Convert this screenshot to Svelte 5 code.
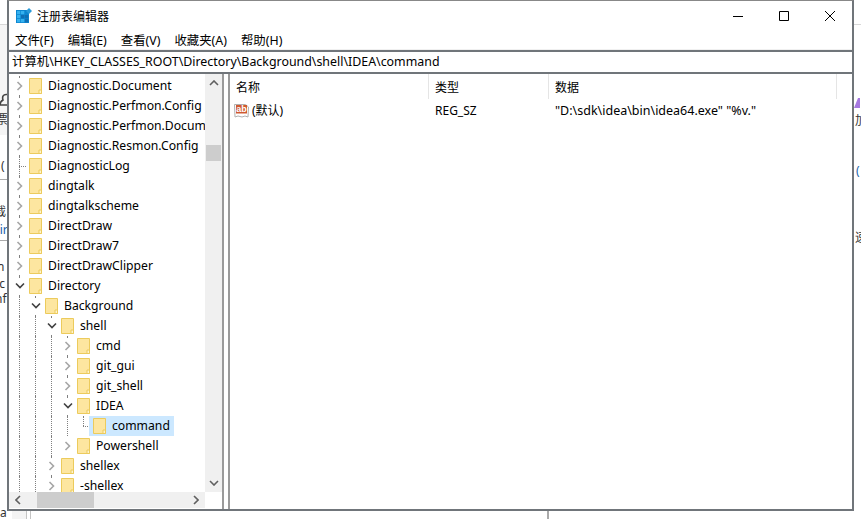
<script lang="ts">
  type Node = { name: string; depth: number; state: 'closed' | 'open' | 'leaf'; guides: number[]; selected?: boolean }

  // guides: tree levels whose dotted line runs through this row
  const nodes: Node[] = [
    { name: 'Diagnostic.Document', depth: 0, state: 'closed', guides: [0] },
    { name: 'Diagnostic.Perfmon.Config', depth: 0, state: 'closed', guides: [0] },
    { name: 'Diagnostic.Perfmon.Document', depth: 0, state: 'closed', guides: [0] },
    { name: 'Diagnostic.Resmon.Config', depth: 0, state: 'closed', guides: [0] },
    { name: 'DiagnosticLog', depth: 0, state: 'leaf', guides: [0] },
    { name: 'dingtalk', depth: 0, state: 'closed', guides: [0] },
    { name: 'dingtalkscheme', depth: 0, state: 'closed', guides: [0] },
    { name: 'DirectDraw', depth: 0, state: 'closed', guides: [0] },
    { name: 'DirectDraw7', depth: 0, state: 'closed', guides: [0] },
    { name: 'DirectDrawClipper', depth: 0, state: 'closed', guides: [0] },
    { name: 'Directory', depth: 0, state: 'open', guides: [0] },
    { name: 'Background', depth: 1, state: 'open', guides: [0, 1] },
    { name: 'shell', depth: 2, state: 'open', guides: [0, 1, 2] },
    { name: 'cmd', depth: 3, state: 'closed', guides: [0, 1, 2, 3] },
    { name: 'git_gui', depth: 3, state: 'closed', guides: [0, 1, 2, 3] },
    { name: 'git_shell', depth: 3, state: 'closed', guides: [0, 1, 2, 3] },
    { name: 'IDEA', depth: 3, state: 'open', guides: [0, 1, 2, 3] },
    { name: 'command', depth: 4, state: 'leaf', guides: [0, 1, 2, 3], selected: true },
    { name: 'Powershell', depth: 3, state: 'closed', guides: [0, 1, 2] },
    { name: 'shellex', depth: 2, state: 'closed', guides: [0, 1, 2] },
    { name: '-shellex', depth: 2, state: 'closed', guides: [0, 1, 2] },
  ]

  const menus = ['文件(F)', '编辑(E)', '查看(V)', '收藏夹(A)', '帮助(H)']

  // bits of the window behind, showing past the edges
  const behind = [
    { t: '票', x: -4, y: 112, c: '#333' },
    { t: '(', x: 1, y: 158, c: '#333' },
    { t: '截', x: -6, y: 204, c: '#333' },
    { t: 'Dir', x: -9, y: 222, c: '#1a5fa8' },
    { t: 'n', x: -3, y: 259, c: '#333' },
    { t: 'oc', x: -8, y: 276, c: '#333' },
    { t: 'nf', x: -5, y: 291, c: '#333' },
    { t: 'a', x: 0, y: 505, c: '#333' },
    { t: '加', x: 855, y: 113, c: '#333' },
    { t: '(', x: 856, y: 163, c: '#1a5fa8' },
    { t: '速', x: 855, y: 230, c: '#333' },
  ]
</script>

<div class="desk">
  <div class="backdrop">
    <i class="panel"></i>
    <svg class="person" width="7" height="16" viewBox="0 0 7 16">
      <path d="M7 2.500C3 2 2 5 3 8c-2 1-3 3-3 5h7" fill="none" stroke="#444" stroke-width="1.600" />
    </svg>
    {#each behind as b}
      <span class="bit" style="left: {b.x}px; top: {b.y}px; color: {b.c}">{b.t}</span>
    {/each}
    <svg class="tri" width="6" height="10" viewBox="0 0 6 10"><path d="M0 10L4 0l2 0v10z" fill="#a678e0" /></svg>
    <i class="stub s1"></i>
    <i class="stub s2"></i>
    <i class="stub s3"></i>
    <i class="stub s4"></i>
    <i class="stub s5"></i>
    <i class="stub s6"></i>
    <i class="stub s7"></i>
    <i class="stub s8"></i>
  </div>

  <div class="window">
    <header class="titlebar">
      <svg class="app-icon" width="16" height="16" viewBox="0 0 16 16">
        <path d="M0 2h13v13H0z" fill="#0c86d0" />
        <path d="M1 3h3.300v3.300H1zM5 3h3.300v3.300H5zM1 7h3.300v3.300H1zM1 11h3.300v3.300H1zM5 11h3.300v3.300H5z" fill="#35b1ef" />
        <path d="M5 7h3.300v3.300H5zM9 7h3.300v3.300H9zM9 11h3.300v3.300H9z" fill="#0f6fb4" />
        <path d="M13 0l3 3-3 3-3-3z" fill="#2a9ad8" />
      </svg>
      <span class="title">注册表编辑器</span>
      <div class="controls">
        <svg width="10" height="10" viewBox="0 0 10 10"><path d="M0 5.500h10" stroke="#000" /></svg>
        <svg width="10" height="10" viewBox="0 0 10 10"><path d="M.5.500h9v9h-9z" fill="none" stroke="#000" /></svg>
        <svg width="10" height="10" viewBox="0 0 10 10"><path d="M0 0l10 10M10 0L0 10" stroke="#000" /></svg>
      </div>
    </header>

    <nav class="menubar">
      {#each menus as m}<span>{m}</span>{/each}
    </nav>

    <div class="address">计算机\HKEY_CLASSES_ROOT\Directory\Background\shell\IDEA\command</div>

    <div class="panes">
      <aside class="tree">
        <div class="tree-view">
          <div class="rows">
            {#each nodes as n}
              <div class="row" style="padding-left: {n.depth * 16 + 2}px">
                {#each n.guides as g}
                  <i class="guide" style="left: {g * 16 + 10}px"></i>
                {/each}
                {#if n.state === 'leaf'}
                  <i class="guide half" style="left: {n.depth * 16 + 10}px"></i>
                  <i class="stub-h" style="left: {n.depth * 16 + 10}px"></i>
                {/if}
                <span class="twisty" class:blank={n.state === 'leaf'}>
                  {#if n.state === 'closed'}
                    <svg width="8" height="10" viewBox="0 0 8 10"><path d="M1.500 1l4 4-4 4" fill="none" stroke="#a6a6a6" stroke-width="1.600" /></svg>
                  {:else if n.state === 'open'}
                    <svg width="10" height="8" viewBox="0 0 10 8"><path d="M1 1.500l4 4 4-4" fill="none" stroke="#404040" stroke-width="1.600" /></svg>
                  {/if}
                </span>
                <span class="item" class:selected={n.selected}>
                  <svg class="folder" width="13" height="16" viewBox="0 0 13 16">
                    <path d="M.5.500h12v15H.5z" fill="#fde6a0" stroke="#eccb5c" />
                    <path d="M10 12h2.500v3.500H10z" fill="#fff3cc" stroke="#eccb5c" />
                  </svg>
                  <span class="label">{n.name}</span>
                </span>
              </div>
            {/each}
          </div>
          <div class="vscroll">
            <svg width="10" height="6" viewBox="0 0 10 6"><path d="M1 5l4-4 4 4" fill="none" stroke="#606060" stroke-width="1.600" /></svg>
            <div class="vtrack"><div class="vthumb"></div></div>
            <svg width="10" height="6" viewBox="0 0 10 6"><path d="M1 1l4 4 4-4" fill="none" stroke="#606060" stroke-width="1.600" /></svg>
          </div>
        </div>
        <div class="hscroll">
          <svg width="6" height="10" viewBox="0 0 6 10"><path d="M5 1L1 5l4 4" fill="none" stroke="#606060" stroke-width="1.600" /></svg>
          <div class="htrack"><div class="hthumb"></div></div>
          <svg width="6" height="10" viewBox="0 0 6 10"><path d="M1 1l4 4-4 4" fill="none" stroke="#606060" stroke-width="1.600" /></svg>
        </div>
      </aside>

      <main class="values">
        <div class="head">
          <span class="c1">名称</span>
          <span class="c2">类型</span>
          <span class="c3">数据</span>
        </div>
        <div class="value-row">
          <span class="c1 name">
            <svg width="16" height="16" viewBox="0 0 16 16">
              <path d="M.5 2.500h11l3 2.500-.500 10-3-1-3 1-4-1-3 1z" fill="#fff" stroke="#b0b0b0" />
              <rect x="2" y="3" width="11" height="8.500" fill="#cf5a32" />
              <text class="ab" x="2.300" y="10.300">ab</text>
            </svg>
            (默认)
          </span>
          <span class="c2">REG_SZ</span>
          <span class="c3 data">"D:\sdk\idea\bin\idea64.exe" "%v."</span>
        </div>
      </main>
    </div>
  </div>
</div>

<style>
  :global(body) {
    margin: 0;
    background: #fff;
    font-family: "Noto Sans", "Noto Sans CJK SC", sans-serif;
    font-size: 12px;
    color: #000;
  }

  .desk {
    position: relative;
    width: 861px;
    height: 519px;
    overflow: hidden;
  }

  .backdrop {
    position: absolute;
    inset: 0;
  }

  .bit {
    position: absolute;
    font-size: 12px;
    line-height: 16px;
    white-space: nowrap;
  }

  .panel {
    position: absolute;
    left: 0;
    top: 25px;
    width: 7px;
    height: 110px;
    background: #f5f5f5;
  }

  .person {
    position: absolute;
    left: 0;
    top: 92px;
  }

  .tri {
    position: absolute;
    left: 854px;
    top: 98px;
  }

  .stub {
    position: absolute;
    background: #d8d8d8;
  }

  .s1 { left: 0; top: 24px; width: 7px; height: 1px; }
  .s2 { left: 12px; top: 511px; width: 14px; height: 8px; background: #f4f4f4; }
  .s3 { left: 26px; top: 511px; width: 1px; height: 8px; background: #c4c4c4; }
  .s4 { left: 30px; top: 511px; width: 1px; height: 8px; background: #c4c4c4; }
  .s5 { left: 547px; top: 511px; width: 2px; height: 8px; background: #aaa; }
  .s6 { left: 0; top: 179px; width: 7px; height: 1px; background: #aaa; }
  .s7 { left: 0; top: 240px; width: 7px; height: 1px; background: #aaa; }
  .s8 { left: 854px; top: 24px; width: 7px; height: 1px; }

  .window {
    position: absolute;
    left: 7px;
    top: 0;
    box-sizing: border-box;
    width: 847px;
    height: 511px;
    border: 2px solid #70757a;
    border-top: 1px solid #888;
    background: #fff;
    display: flex;
    flex-direction: column;
    overflow: hidden;
  }

  .titlebar {
    height: 29px;
    display: flex;
    align-items: center;
    padding-left: 7px;
    gap: 5px;
    flex: none;
  }

  .controls {
    margin-left: auto;
    display: flex;
    gap: 36px;
    padding-right: 17px;
  }

  .controls svg { display: block; }

  .menubar {
    height: 20px;
    display: flex;
    align-items: center;
    gap: 14px;
    padding-left: 6px;
    flex: none;
    border-bottom: 1px solid #f0f0f0;
    box-sizing: border-box;
    font-size: 12.4px;
  }

  .address {
    box-sizing: border-box;
    height: 24px;
    margin-left: -1px;
    border-top: 2px solid #70757a;
    border-bottom: 2px solid #70757a;
    padding-left: 4px;
    line-height: 20px;
    white-space: nowrap;
    flex: none;
    font-size: 12.4px;
  }

  .panes {
    flex: 1;
    min-height: 0;
    display: flex;
  }

  .tree {
    width: 213px;
    flex: none;
    display: flex;
    flex-direction: column;
    border-right: 2px solid #9a9a9a;
    padding-bottom: 1px;
    font-size: 12.2px;
  }

  .tree-view {
    flex: 1;
    min-height: 0;
    display: flex;
  }

  .rows {
    flex: 1;
    min-width: 0;
    overflow: hidden;
    padding-top: 2px;
  }

  .row {
    position: relative;
    height: 20px;
    display: flex;
    align-items: center;
    white-space: nowrap;
  }

  .guide {
    position: absolute;
    top: 0;
    bottom: 0;
    width: 0;
    border-left: 1px dotted #808080;
  }

  .guide.half { bottom: 10px; }

  .stub-h {
    position: absolute;
    top: 10px;
    width: 7px;
    height: 0;
    border-top: 1px dotted #808080;
  }

  .twisty {
    position: relative;
    width: 17px;
    height: 16px;
    margin-right: 1px;
    flex: none;
    display: flex;
    align-items: center;
    justify-content: center;
    background: #fff;
  }

  .twisty.blank { background: none; }

  .item {
    position: relative;
    display: flex;
    align-items: center;
    height: 20px;
  }

  .item.selected {
    background: #cce8ff;
    margin-left: -4px;
    padding: 0 3px 0 4px;
  }

  .folder { flex: none; }

  .label {
    margin-left: 5px;
    padding: 0 1px;
    line-height: 20px;
  }

  .vscroll {
    width: 17px;
    flex: none;
    background: #f0f0f0;
    display: flex;
    flex-direction: column;
    align-items: center;
    padding: 6px 0;
    box-sizing: border-box;
  }

  .vtrack { flex: 1; width: 100%; padding-top: 59px; box-sizing: border-box; }
  .vthumb { height: 16px; background: #cdcdcd; margin: 0 1px; }

  .hscroll {
    height: 16px;
    flex: none;
    margin-right: 17px;
    background: #f0f0f0;
    display: flex;
    align-items: center;
    padding: 0 6px;
  }

  .htrack { flex: 1; height: 100%; padding-left: 16px; }
  .hthumb { width: 57px; height: 100%; background: #cdcdcd; }

  .values {
    flex: 1;
    min-width: 0;
    border-left: 2px solid #9a9a9a;
    margin-left: 4px;
  }

  .head {
    height: 25px;
    margin-bottom: 1px;
    display: flex;
    align-items: center;
  }

  .head span {
    box-sizing: border-box;
    height: 100%;
    line-height: 27px;
    border-right: 1px solid #e5e5e5;
  }

  .value-row {
    height: 20px;
    display: flex;
    align-items: center;
  }

  .c1 { width: 199px; padding-left: 6px; box-sizing: border-box; }
  .c2 { width: 120px; padding-left: 6px; box-sizing: border-box; }
  .c3 { width: 288px; padding-left: 6px; box-sizing: border-box; }

  .name { display: flex; align-items: center; gap: 2px; padding-left: 4px; }

  .data { font-size: 12.5px; white-space: nowrap; }

  .ab {
    font-family: "Liberation Sans", sans-serif;
    font-size: 9px;
    font-weight: 700;
    fill: #fff;
  }
</style>
